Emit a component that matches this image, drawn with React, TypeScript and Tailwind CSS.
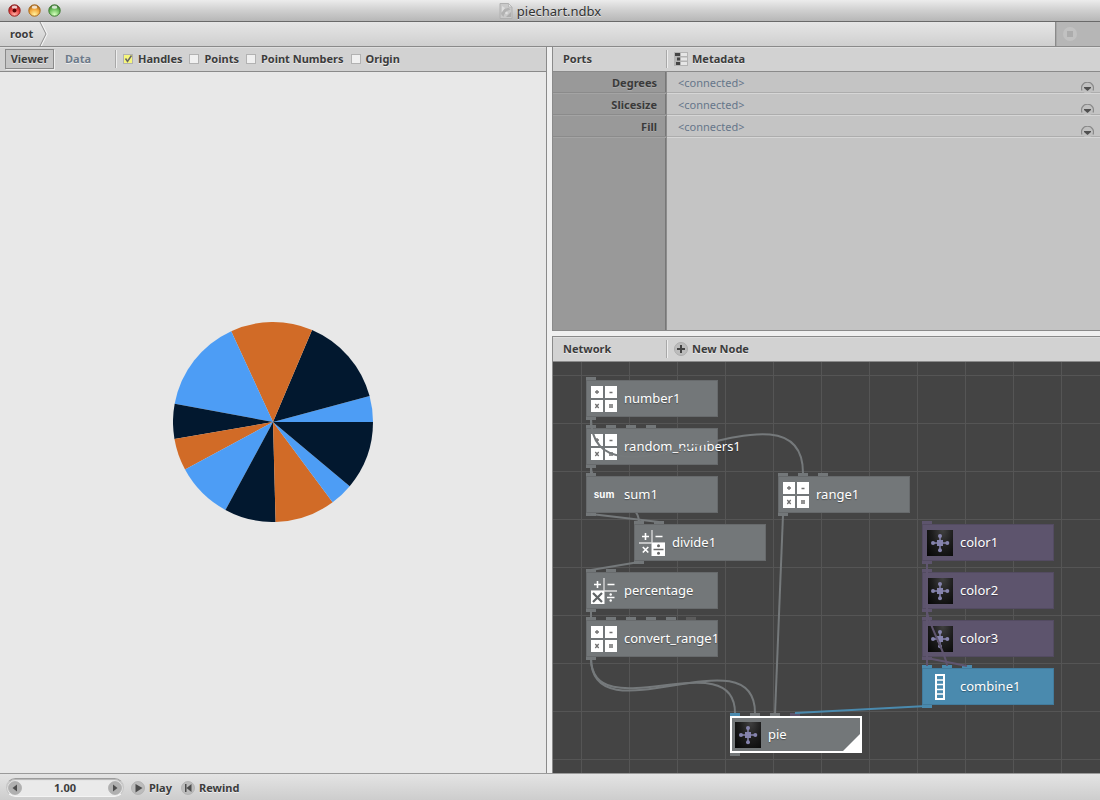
import React, { useState } from "react";

const EMBOSS = "[text-shadow:0_1px_0_rgba(255,255,255,0.6)]";
const LABEL = `text-[11px] leading-4 font-bold text-[#3c3c3c] whitespace-nowrap ${EMBOSS}`;

/* ---------- Title bar ---------- */

function TrafficLight({ id, label, dark, mid, light, dot }: { id: string; label: string; dark: string; mid: string; light: string; dot?: boolean }) {
  return (
    <button type="button" aria-label={label} className="block h-[13px] w-[13px]">
      <svg viewBox="0 0 13 13" className="block h-full w-full">
        <defs>
          <radialGradient id={id} cx="50%" cy="85%" r="75%">
            <stop offset="0%" stopColor={light} />
            <stop offset="65%" stopColor={mid} />
            <stop offset="100%" stopColor={dark} />
          </radialGradient>
        </defs>
        <circle cx="6.5" cy="6.5" r="5.7" fill={`url(#${id})`} stroke={dark} strokeWidth="1" />
        <ellipse cx="6.5" cy="3.2" rx="2.8" ry="1.6" fill="#fff" opacity="0.75" />
        {dot && <circle cx="6.5" cy="6.5" r="2" fill="#5a0505" />}
      </svg>
    </button>
  );
}

function FileIcon() {
  return (
    <svg viewBox="0 0 14 16" className="h-4 w-[14px]" aria-hidden="true">
      <path d="M1 .5h8.5L13 4v11.5H1z" fill="#c9c9c9" stroke="#b0b0b0" />
      <path d="M9.5.5V4H13z" fill="#e6e6e6" stroke="#b4b4b4" strokeWidth=".8" />
      <path d="M2 11c1-4 4-6 8-6l1.500 2c-4 0-6 3-7 7z" fill="#b2b2b2" />
      <path d="M3 3l3 2-3 4z" fill="#dedede" />
      <path d="M7 14l5-5v5z" fill="#adadad" />
      <circle cx="7.500" cy="10" r="1.300" fill="#e0e0e0" />
    </svg>
  );
}

function TitleBar() {
  return (
    <header className="relative flex h-[22px] flex-none items-center border-b border-[#6a6a6a] bg-linear-to-b from-[#ececec] via-[#cfcfcf] to-[#b7b7b7] px-2">
      <div className="flex gap-[7px]">
        <TrafficLight id="close" label="Close" dark="#96201f" mid="#e8403f" light="#ffb0a6" dot />
        <TrafficLight id="minimise" label="Minimise" dark="#a8691c" mid="#f2a63a" light="#fff2a0" />
        <TrafficLight id="zoom" label="Zoom" dark="#3f7a34" mid="#6cc05c" light="#d8ffc0" />
      </div>
      <div className="pointer-events-none absolute inset-0 flex items-center justify-center gap-1">
        <FileIcon />
        <h1 className={`text-[13px] leading-5 text-[#333] ${EMBOSS}`}>piechart.ndbx</h1>
      </div>
    </header>
  );
}

/* ---------- Address bar ---------- */

function AddressBar() {
  return (
    <nav className="flex h-[25px] flex-none border-b border-[#8a8a8a] bg-[#b6b6b6]">
      <div className="flex flex-1 items-center border-r border-[#8a8a8a] bg-linear-to-b from-[#e6e6e6] to-[#cfcfcf] pl-[10px]">
        <a href="#root" className={LABEL}>root</a>
        <svg viewBox="0 0 10 24" className="ml-[6px] h-6 w-[10px]" fill="none" aria-hidden="true">
          <path d="M2 0l6 12-6 12" stroke="#f5f5f5" strokeWidth="1.4" />
          <path d="M1 0l6 12-6 12" stroke="#8e8e8e" />
        </svg>
      </div>
      <div className="flex w-11 items-center border-l border-[#a6a6a6] pl-[6px]">
        <button type="button" aria-label="Stop" className="block h-[14px] w-[14px]">
          <svg viewBox="0 0 14 14" className="block h-full w-full">
            <circle cx="7" cy="7" r="7" fill="#c1c1c1" />
            <rect x="4" y="4" width="6" height="6" fill="#acacac" />
          </svg>
        </button>
      </div>
    </nav>
  );
}

/* ---------- Shared pane pieces ---------- */

function PaneHeader({ children }: { children: React.ReactNode }) {
  return (
    <div className="flex h-[25px] flex-none items-center border-b border-[#8a8a8a] bg-[#d2d2d2] shadow-[inset_0_1px_0_#dedede]">
      {children}
    </div>
  );
}

function Separator() {
  return <div className="h-[18px] w-[2px] flex-none border-l border-[#a8a8a8] bg-[#eee]" />;
}

/* ---------- Viewer ---------- */

const BLUE = "#4d9df5";
const NAVY = "#02182f";
const ORANGE = "#d16b27";

const SLICES: [number, number, string][] = [
  [0, 15, BLUE],
  [15, 67, NAVY],
  [67, 114.7, ORANGE],
  [114.7, 169.5, BLUE],
  [169.5, 189.8, NAVY],
  [189.8, 208.4, ORANGE],
  [208.4, 241.6, BLUE],
  [241.6, 271.5, NAVY],
  [271.5, 306.6, ORANGE],
  [306.6, 320.1, BLUE],
  [320.1, 360, NAVY],
];

function slicePath(from: number, to: number) {
  const point = (deg: number) => {
    const a = (deg * Math.PI) / 180;
    return `${(100 * Math.cos(a)).toFixed(2)} ${(-100 * Math.sin(a)).toFixed(2)}`;
  };
  return `M0 0L${point(from)}A100 100 0 0 0 ${point(to)}Z`;
}

function CheckOption({ label, initial = false }: { label: string; initial?: boolean }) {
  const [checked, setChecked] = useState(initial);
  return (
    <label className={`flex items-center gap-[5px] ${LABEL}`}>
      <span className="grid h-[10px] w-[10px]">
        <input
          type="checkbox"
          checked={checked}
          onChange={(e) => setChecked(e.target.checked)}
          className="col-start-1 row-start-1 h-[10px] w-[10px] appearance-none border border-[#b2b2b2] bg-[#f0f0f0] checked:bg-[#f6f67c]"
        />
        {checked && (
          <svg viewBox="0 0 10 10" className="pointer-events-none col-start-1 row-start-1 h-[10px] w-[10px]" fill="none">
            <path d="M2.5 4.5L4.5 7.5L8.5 1.5" stroke="#666" strokeWidth="1.5" />
          </svg>
        )}
      </span>
      {label}
    </label>
  );
}

function Viewer() {
  return (
    <section className="flex min-h-0 flex-col border-r border-[#8a8a8a] bg-[#e8e8e8]">
      <PaneHeader>
        <button type="button" className={`ml-[5px] h-5 w-[49px] border border-[#8a8a8a] bg-[#c6c6c6] text-center shadow-[1px_1px_0_#eee] ${LABEL}`}>
          Viewer
        </button>
        <button type="button" className={`ml-[11px] w-[50px] text-left text-[11px] leading-4 font-bold text-[#6d7a8a] ${EMBOSS}`}>
          Data
        </button>
        <Separator />
        <div className="ml-[6px] flex gap-[7px]">
          <CheckOption label="Handles" initial />
          <CheckOption label="Points" />
          <CheckOption label="Point Numbers" />
          <CheckOption label="Origin" />
        </div>
      </PaneHeader>
      <div className="flex flex-1 items-center justify-center pb-px">
        <svg viewBox="-100 -100 200 200" className="h-[200px] w-[200px]" role="img" aria-label="Pie chart">
          {SLICES.map(([from, to, color]) => (
            <path key={from} d={slicePath(from, to)} fill={color} />
          ))}
        </svg>
      </div>
    </section>
  );
}

/* ---------- Ports ---------- */

function MetadataIcon() {
  return (
    <svg viewBox="0 0 14 14" className="h-[14px] w-[14px]" aria-hidden="true">
      <rect width="14" height="14" fill="#b4b4b4" />
      <rect x="1" y="1" width="5" height="3" fill="#444" />
      <rect x="3" y="5.5" width="3" height="3" fill="#444" />
      <rect x="2" y="10" width="4" height="3" fill="#444" />
      <path d="M7 1h6v3H7zM7 5.5h6v3H7zM7 10h6v3H7z" fill="#e6e6e6" />
    </svg>
  );
}

function PortRow({ name }: { name: string }) {
  return (
    <div className="flex h-[22px]">
      <div className="flex w-[113px] flex-none items-center justify-end border-b border-[#a4a4a4] pr-[9px] shadow-[inset_0_-1px_0_#8b8b8b]">
        <span className="text-[11px] leading-4 font-bold text-[#3a3a3a] [text-shadow:0_1px_0_#aaa]">{name}</span>
      </div>
      <div className="ml-px flex flex-1 items-center justify-between border-b border-[#d6d6d6] pr-[6px] pl-[11px] shadow-[inset_0_-1px_0_#adadad]">
        <span className="text-[11px] leading-4 text-[#66768a]">&lt;connected&gt;</span>
        <button type="button" aria-label={`${name} options`} className="h-[11px] w-[13px] self-end">
          <svg viewBox="0 0 13 11" className="block h-full w-full">
            <circle cx="6.5" cy="6" r="5.5" fill="#c0c0c0" />
            <path d="M1 8.500A6 6 0 1 1 12 8.500" fill="none" stroke="#8a8a8a" strokeWidth="1.2" />
            <path d="M3 5h7v1L6.500 9L3 6z" fill="#505050" />
          </svg>
        </button>
      </div>
    </div>
  );
}

function Ports() {
  return (
    <section className="flex min-h-0 flex-col border-b border-l border-[#8a8a8a]">
      <PaneHeader>
        <h2 className={`w-[113px] pl-[10px] ${LABEL}`}>Ports</h2>
        <Separator />
        <button type="button" className={`ml-[6px] flex items-center gap-1 ${LABEL}`}>
          <MetadataIcon />
          Metadata
        </button>
      </PaneHeader>
      <div className="flex-1 bg-[linear-gradient(to_right,#999_112px,#777_112px,#777_113px,#8c8c8c_113px,#8c8c8c_114px,#c4c4c4_114px)]">
        <PortRow name="Degrees" />
        <PortRow name="Slicesize" />
        <PortRow name="Fill" />
      </div>
    </section>
  );
}

/* ---------- Network ---------- */

function CalculatorIcon() {
  return (
    <svg viewBox="0 0 26 26" className="h-[26px] w-[26px]" aria-hidden="true">
      <path d="M0 0h12v12H0zM14 0h12v12H14zM0 14h12v12H0zM14 14h12v12H14z" fill="#fff" />
      <g stroke="#707070" strokeWidth="1.3" fill="none">
        <path d="M4 6h4M6 4v4M18.500 6.500h3M18 19h4M18 21h4" />
        <path d="M4.300 18l3.400 4M7.700 18l-3.400 4" />
      </g>
    </svg>
  );
}

function ArithmeticIcon({ active }: { active: "divide" | "multiply" }) {
  const divide = active === "divide";
  return (
    <svg viewBox="0 0 26 26" className="h-[26px] w-[26px]" aria-hidden="true">
      <path d="M13 0v26M0 13h26" stroke="#ddd" strokeWidth="1.300" />
      <path d="M3 6.500h7M6.500 3v7M16.500 6.500h7" stroke="#fff" strokeWidth="1.600" />
      {divide ? (
        <>
          <path d="M3.800 17l5.500 5.500M9.300 17l-5.500 5.500" stroke="#fff" strokeWidth="1.700" />
          <rect x="13" y="13" width="13" height="13" fill="#fff" />
          <path d="M14.500 19.500h10" stroke="#666" strokeWidth="1.500" />
          <circle cx="19.500" cy="15.800" r="1.500" fill="#666" />
          <circle cx="19.500" cy="23.300" r="1.500" fill="#666" />
        </>
      ) : (
        <>
          <rect x="0" y="13" width="13" height="13" fill="#fff" />
          <path d="M2 15l9 9M11 15l-9 9" stroke="#606466" strokeWidth="2.200" />
          <path d="M16 19.500h7.500" stroke="#fff" strokeWidth="1.500" />
          <circle cx="19.700" cy="16.500" r="1.200" fill="#fff" />
          <circle cx="19.700" cy="22.500" r="1.200" fill="#fff" />
        </>
      )}
    </svg>
  );
}

function NodeIcon() {
  return (
    <svg viewBox="0 0 26 26" className="h-[26px] w-[26px] bg-[#080808] bg-[radial-gradient(ellipse_at_60%_0%,#404040,#1c1c1c_50%,#040404)]" aria-hidden="true">
      <path d="M13 6v14M6 13h14" stroke="#8583ad" strokeWidth="1.500" />
      <rect x="10" y="10" width="6" height="6" fill="#8583ad" />
      <g fill="#8583ad">
        <circle cx="13" cy="6" r="2" />
        <circle cx="13" cy="20.300" r="2" />
        <circle cx="6" cy="13" r="2" />
        <circle cx="20.300" cy="13" r="2" />
      </g>
    </svg>
  );
}

function CombineIcon() {
  return (
    <svg viewBox="0 0 26 26" className="h-[26px] w-[26px]" aria-hidden="true">
      <rect x="9" y="1" width="8" height="24" fill="none" stroke="#fff" strokeWidth="2" />
      <path d="M9 6h8M9 10.500h8M9 15.500h8M9 20h8" stroke="#fff" strokeWidth="1.300" />
    </svg>
  );
}

function SumIcon() {
  return <span className="block w-[26px] text-center font-['Liberation_Sans',sans-serif] text-[10px] leading-[26px] font-bold">sum</span>;
}

type NodeSpec = { name: string; x: number; y: number; tone: string; icon: React.ReactNode; inputs: string[]; output: string; selected?: boolean };

const GREY = "bg-[#737779]";
const PURPLE = "bg-[#5d546d]";
const CYAN = "bg-[#4a8aae]";
const DIM = "bg-[#5c5c5c]";

const NODES: NodeSpec[] = [
  { name: "number1", x: 33, y: 18, tone: GREY, icon: <CalculatorIcon />, inputs: [GREY], output: GREY },
  { name: "random_numbers1", x: 33, y: 66, tone: GREY, icon: <CalculatorIcon />, inputs: [GREY, GREY, GREY, GREY], output: GREY },
  { name: "sum1", x: 33, y: 114, tone: GREY, icon: <SumIcon />, inputs: [GREY], output: GREY },
  { name: "divide1", x: 81, y: 162, tone: GREY, icon: <ArithmeticIcon active="divide" />, inputs: [GREY, GREY], output: GREY },
  { name: "percentage", x: 33, y: 210, tone: GREY, icon: <ArithmeticIcon active="multiply" />, inputs: [GREY, GREY], output: GREY },
  { name: "convert_range1", x: 33, y: 258, tone: GREY, icon: <CalculatorIcon />, inputs: [GREY, GREY, GREY, GREY, GREY, DIM], output: GREY },
  { name: "range1", x: 225, y: 114, tone: GREY, icon: <CalculatorIcon />, inputs: [GREY, GREY, GREY], output: GREY },
  { name: "color1", x: 369, y: 162, tone: PURPLE, icon: <NodeIcon />, inputs: [PURPLE], output: PURPLE },
  { name: "color2", x: 369, y: 210, tone: PURPLE, icon: <NodeIcon />, inputs: [PURPLE], output: PURPLE },
  { name: "color3", x: 369, y: 258, tone: PURPLE, icon: <NodeIcon />, inputs: [PURPLE], output: PURPLE },
  { name: "combine1", x: 369, y: 306, tone: CYAN, icon: <CombineIcon />, inputs: [CYAN, CYAN, CYAN], output: CYAN },
  { name: "pie", x: 177, y: 354, tone: GREY, icon: <NodeIcon />, inputs: [CYAN, GREY, GREY, PURPLE], output: GREY, selected: true },
];

function GraphNode({ node }: { node: NodeSpec }) {
  return (
    <div className="absolute w-[132px]" style={{ left: node.x, top: node.y - 3 }}>
      <div className="flex h-[3px] gap-[10px]">
        {node.inputs.map((tone, i) => (
          <div key={i} className={`h-[3px] w-[10px] ${tone}`} />
        ))}
      </div>
      <div
        className={`relative flex h-[37px] items-center border pl-1 ${node.tone} ${
          node.selected ? "border-white shadow-[inset_0_0_0_1px_#fff]" : "border-black/10"
        }`}
      >
        <div className="flex-none text-white">{node.icon}</div>
        <span className="ml-[7px] pb-[2px] text-[13px] leading-5 whitespace-nowrap text-white [text-shadow:0_1px_1px_rgba(0,0,0,0.35)]">{node.name}</span>
        {node.selected && (
          <svg viewBox="0 0 19 19" className="absolute right-0 bottom-0 h-[19px] w-[19px]" aria-hidden="true">
            <path d="M19 0v19H0z" fill="#fff" />
          </svg>
        )}
      </div>
      <div className={`h-[3px] w-[10px] ${node.output}`} />
    </div>
  );
}

const WIRE_GREY = "#75797b";
const WIRE_PURPLE = "#5f556f";
const WIRE_CYAN = "#4a8aae";

type Wire = [number, number, number, number, string];

const BACK_WIRES: Wire[] = [[38, 105, 86, 160, WIRE_GREY]];

const FRONT_WIRES: Wire[] = [
  [38, 57, 38, 64, WIRE_GREY],
  [38, 56, 250, 111, WIRE_GREY],
  [38, 105, 38, 112, WIRE_GREY],
  [38, 152, 106, 160, WIRE_GREY],
  [86, 200, 38, 208, WIRE_GREY],
  [38, 249, 38, 256, WIRE_GREY],
  [38, 296, 182, 351, WIRE_GREY],
  [38, 296, 202, 351, WIRE_GREY],
  [230, 153, 222, 352, WIRE_GREY],
  [374, 201, 374, 304, WIRE_PURPLE],
  [374, 249, 394, 304, WIRE_PURPLE],
  [374, 296, 414, 304, WIRE_PURPLE],
  [374, 344, 242, 351, WIRE_CYAN],
];

/* Short vertical hops are straight; longer ones bend by half the horizontal distance. */
function wirePath(x0: number, y0: number, x1: number, y1: number) {
  if (Math.abs(y1 - y0) < 12) return `M${x0} ${y0}L${x1} ${y1}`;
  const half = Math.abs(x1 - x0) / 2;
  return `M${x0} ${y0}C${x0} ${y0 + half} ${x1} ${y1 - half} ${x1} ${y1}`;
}

function WireLayer({ wires }: { wires: Wire[] }) {
  return (
    <svg className="pointer-events-none absolute inset-0 h-full w-full" fill="none" strokeWidth="2" aria-hidden="true">
      {wires.map(([x0, y0, x1, y1, color], i) => (
        <path key={i} d={wirePath(x0, y0, x1, y1)} stroke={color} />
      ))}
    </svg>
  );
}

function Network() {
  return (
    <section className="flex min-h-0 flex-col border-t border-l border-[#8a8a8a]">
      <PaneHeader>
        <h2 className={`w-[113px] pl-[10px] ${LABEL}`}>Network</h2>
        <Separator />
        <button type="button" className={`ml-[6px] flex items-center gap-1 ${LABEL}`}>
          <svg viewBox="0 0 14 14" className="h-[14px] w-[14px]" aria-hidden="true">
            <circle cx="7" cy="7" r="6.500" fill="#bcbcbc" stroke="#adadad" />
            <path d="M3 7h8M7 3v8" stroke="#444" strokeWidth="2" />
          </svg>
          New Node
        </button>
      </PaneHeader>
      <div className="relative flex-1 overflow-hidden bg-[#444] bg-[linear-gradient(to_right,#555_1px,transparent_1px),linear-gradient(to_bottom,#555_1px,transparent_1px)] [background-position:28px_13px] [background-size:48px_48px]">
        <WireLayer wires={BACK_WIRES} />
        {NODES.map((node) => (
          <GraphNode key={node.name} node={node} />
        ))}
        <WireLayer wires={FRONT_WIRES} />
      </div>
    </section>
  );
}

/* ---------- Animation bar ---------- */

function RoundIcon({ d, tone = "#bcbcbc" }: { d: string; tone?: string }) {
  return (
    <svg viewBox="0 0 14 14" className="block h-[14px] w-[14px]" aria-hidden="true">
      <circle cx="7" cy="7" r="6.500" fill={tone} stroke="#adadad" strokeWidth=".8" />
      <path d={d} fill="#4c4c4c" />
    </svg>
  );
}

function AnimationBar() {
  const [frame, setFrame] = useState("1.00");
  const step = (delta: number) => setFrame((Number(frame) + delta).toFixed(2));
  return (
    <footer className="flex h-[27px] flex-none items-center border-t border-[#9a9a9a] bg-linear-to-b from-[#e4e4e4] to-[#cdcdcd] pt-px pl-[6px]">
      <div className="flex h-[19px] w-[118px] items-center rounded-full border border-t-[#9c9c9c] border-r-[#c4c4c4] border-b-[#f4f4f4] border-l-[#c4c4c4] bg-[#eaeaea] px-[1px] shadow-[inset_0_1px_1px_#b4b4b4]">
        <button type="button" aria-label="Previous frame" onClick={() => step(-1)}>
          <RoundIcon d="M9 3.500v7L4.500 7z" tone="#b0b0b0" />
        </button>
        <input
          aria-label="Frame"
          value={frame}
          onChange={(e) => setFrame(e.target.value)}
          className="w-0 min-w-0 flex-1 bg-transparent text-center text-[11px] leading-4 font-bold text-[#3c3c3c] outline-none"
        />
        <button type="button" aria-label="Next frame" onClick={() => step(1)}>
          <RoundIcon d="M5 3.500v7l4.500-3.500z" tone="#b0b0b0" />
        </button>
      </div>
      <button type="button" className={`ml-[7px] flex items-center gap-1 ${LABEL}`}>
        <RoundIcon d="M4.500 3v8.500L11.500 7z" />
        Play
      </button>
      <button type="button" className={`ml-[9px] flex items-center gap-1 ${LABEL}`} onClick={() => setFrame("1.00")}>
        <RoundIcon d="M4 3h1.500v8H4zM10.500 3v8L5.500 7z" />
        Rewind
      </button>
    </footer>
  );
}

export default function App() {
  return (
    <div className="flex h-screen flex-col bg-[#f0f0f0] font-['Noto_Sans',sans-serif]">
      <TitleBar />
      <AddressBar />
      <main className="grid min-h-0 flex-1 grid-cols-[minmax(0,547fr)_minmax(0,548fr)] gap-x-[5px]">
        <Viewer />
        <div className="grid min-h-0 grid-rows-[minmax(0,284fr)_minmax(0,437fr)] gap-y-[5px]">
          <Ports />
          <Network />
        </div>
      </main>
      <AnimationBar />
    </div>
  );
}
